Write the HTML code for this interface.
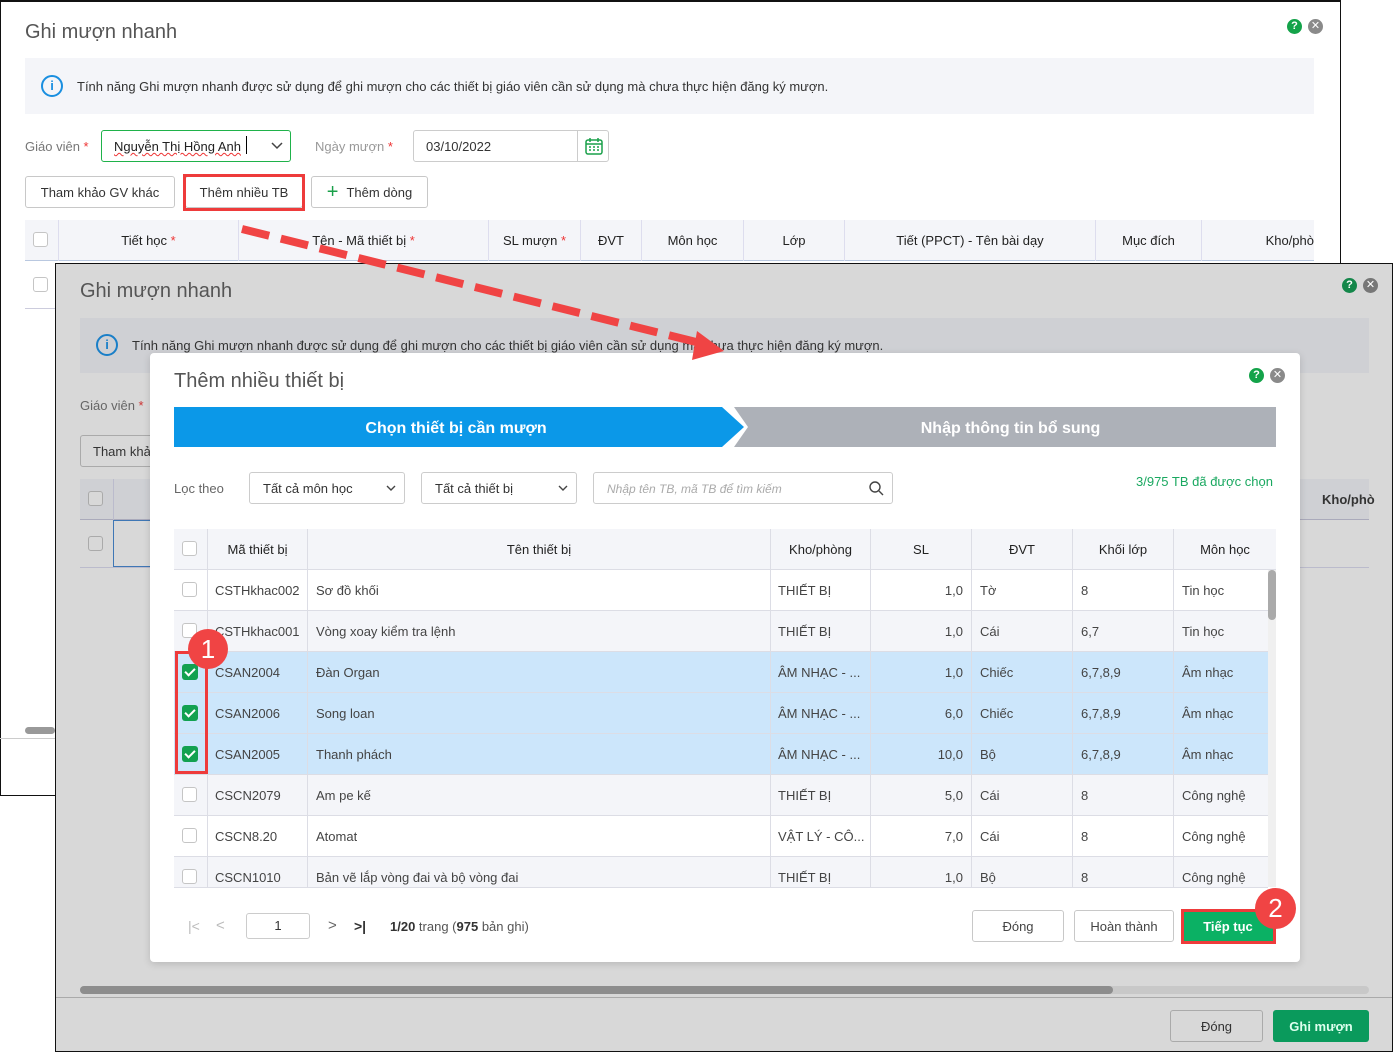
<!DOCTYPE html>
<html><head><meta charset="utf-8">
<style>
*{box-sizing:border-box;margin:0;padding:0}
body{width:1393px;height:1052px;position:relative;overflow:hidden;background:#fff;font-family:"Liberation Sans","DejaVu Sans",sans-serif;font-size:13px;color:#333}
.a{position:absolute}
.btn{position:absolute;border:1px solid #c8c8c8;border-radius:3px;background:#fff;display:flex;align-items:center;justify-content:center;font-size:13px;color:#333}
.cb{position:absolute;width:15px;height:15px;border:1px solid #c5c5c5;border-radius:3px;background:#fff}
.cbon{position:absolute;width:16px;height:16px;border-radius:3px;background:#12a150}
.cbon:after{content:"";position:absolute;left:5px;top:2px;width:4px;height:8px;border:solid #fff;border-width:0 2px 2px 0;transform:rotate(45deg)}
.th{position:absolute;display:flex;align-items:center;justify-content:center;font-size:13px;color:#222}
.row{position:absolute;left:174px;width:1094px;height:41px;border-bottom:1px solid #dcdde5}
.c{position:absolute;top:0;height:41px;line-height:41px;font-size:13px;color:#444;white-space:nowrap;overflow:hidden}
.vl{position:absolute;top:0;width:1px;height:41px;background:#dcdde5}
.ic{position:absolute;width:15px;height:15px;border-radius:50%;color:#fff;font-size:11px;font-weight:bold;text-align:center;line-height:15px}
</style></head><body>

<div class="a" style="left:0;top:0;width:1341px;height:796px;border:1px solid #111;border-top:2px solid #111;background:#fff"></div>
<div class="a" style="left:25px;top:21px;font-size:20px;color:#555">Ghi mượn nhanh</div>
<div class="ic" style="left:1287px;top:19px;background:#14a34a">?</div>
<div class="ic" style="left:1308px;top:19px;background:#8a8a8a">✕</div>
<div class="a" style="left:25px;top:58px;width:1289px;height:56px;background:#f4f5f9"></div>
<div class="a" style="left:41px;top:75px;width:22px;height:22px;border:2px solid #1a8fe0;border-radius:50%;color:#1a8fe0;text-align:center;font-size:13px;line-height:18px;font-weight:bold">i</div>
<div class="a" style="left:77px;top:79px;color:#333">Tính năng Ghi mượn nhanh được sử dụng để ghi mượn cho các thiết bị giáo viên cần sử dụng mà chưa thực hiện đăng ký mượn.</div>
<div class="a" style="left:25px;top:139px;color:#777">Giáo viên <span style="color:#e33">*</span></div>
<div class="a" style="left:101px;top:130px;width:190px;height:32px;border:1px solid #1fb24a;border-radius:3px"></div>
<div class="a" style="left:114px;top:139px;color:#222;text-decoration:underline wavy #e33;text-decoration-thickness:1px">Nguyễn Thị Hồng Anh</div>
<div class="a" style="left:246px;top:136px;width:1px;height:18px;background:#000"></div>
<svg class="a" style="left:271px;top:142px" width="12" height="8"><path d="M1 1l5 5 5-5" fill="none" stroke="#444" stroke-width="1.5"/></svg>
<div class="a" style="left:315px;top:139px;color:#999">Ngày mượn <span style="color:#e33">*</span></div>
<div class="a" style="left:413px;top:130px;width:196px;height:32px;border:1px solid #ccc;border-radius:3px"></div>
<div class="a" style="left:577px;top:131px;width:1px;height:30px;background:#ccc"></div>
<div class="a" style="left:426px;top:139px;color:#333">03/10/2022</div>
<svg class="a" style="left:584px;top:136px" width="20" height="20"><rect x="2" y="4" width="16" height="14" rx="2" fill="none" stroke="#1aa04a" stroke-width="1.5"/><path d="M2 8h16M6 2v4M14 2v4" stroke="#1aa04a" stroke-width="1.5"/><path d="M5 11h2M9 11h2M13 11h2M5 14h2M9 14h2M13 14h2" stroke="#1aa04a" stroke-width="1.5"/></svg>
<div class="btn" style="left:25px;top:176px;width:150px;height:32px">Tham khảo GV khác</div>
<div class="btn" style="left:185px;top:176px;width:118px;height:32px">Thêm nhiều TB</div>
<div class="a" style="left:183px;top:174px;width:122px;height:37px;border:3px solid #ee3b3b"></div>
<div class="btn" style="left:311px;top:176px;width:117px;height:32px"><span style="color:#1aa04a;font-size:20px;margin-right:8px;font-weight:300">+</span>Thêm dòng</div>
<div class="a" style="left:25px;top:220px;width:1289px;height:41px;background:#f4f5f9;border-bottom:1px solid #b9c8e0"></div>
<div class="cb" style="left:33px;top:232px"></div>
<div class="th" style="left:58px;top:220px;width:180px;height:41px;border-left:1px solid #dde">Tiết học&nbsp;<span style="color:#e33">*</span></div>
<div class="th" style="left:238px;top:220px;width:250px;height:41px;border-left:1px solid #dde">Tên - Mã thiết bị&nbsp;<span style="color:#e33">*</span></div>
<div class="th" style="left:488px;top:220px;width:92px;height:41px;border-left:1px solid #dde">SL mượn&nbsp;<span style="color:#e33">*</span></div>
<div class="th" style="left:580px;top:220px;width:61px;height:41px;border-left:1px solid #dde">ĐVT</div>
<div class="th" style="left:641px;top:220px;width:102px;height:41px;border-left:1px solid #dde">Môn học</div>
<div class="th" style="left:743px;top:220px;width:101px;height:41px;border-left:1px solid #dde">Lớp</div>
<div class="th" style="left:844px;top:220px;width:251px;height:41px;border-left:1px solid #dde">Tiết (PPCT) - Tên bài dạy</div>
<div class="th" style="left:1095px;top:220px;width:106px;height:41px;border-left:1px solid #dde">Mục đích</div>
<div class="th" style="left:1201px;top:220px;width:113px;height:41px;border-left:1px solid #dde;justify-content:flex-end">Kho/phò</div>
<div class="cb" style="left:33px;top:277px"></div>
<div class="a" style="left:25px;top:308px;width:30px;height:1px;background:#ccd"></div>
<div class="a" style="left:25px;top:727px;width:30px;height:7px;border-radius:4px;background:#999"></div>
<div class="a" style="left:0;top:738px;width:55px;height:1px;background:#ccc"></div>

<div class="a" style="left:55px;top:263px;width:1338px;height:789px;background:#d8d8d8;border:1px solid #111"></div>
<div class="a" style="left:80px;top:280px;font-size:20px;color:#555">Ghi mượn nhanh</div>
<div class="ic" style="left:1342px;top:278px;background:#14874a">?</div>
<div class="ic" style="left:1363px;top:278px;background:#777">✕</div>
<div class="a" style="left:80px;top:318px;width:1289px;height:55px;background:#cfd0d4"></div>
<div class="a" style="left:96px;top:334px;width:22px;height:22px;border:2px solid #1a7fc8;border-radius:50%;color:#1a7fc8;text-align:center;font-size:13px;line-height:18px;font-weight:bold">i</div>
<div class="a" style="left:132px;top:338px;color:#333">Tính năng Ghi mượn nhanh được sử dụng để ghi mượn cho các thiết bị giáo viên cần sử dụng mà chưa thực hiện đăng ký mượn.</div>
<div class="a" style="left:80px;top:398px;color:#666">Giáo viên <span style="color:#c33">*</span></div>
<div class="a" style="left:80px;top:435px;width:100px;height:32px;border:1px solid #aaa;border-radius:3px;background:#d8d8d8;padding:8px 12px;color:#333">Tham khảo</div>
<div class="a" style="left:80px;top:479px;width:1289px;height:41px;background:#cfd0d4;border-bottom:1px solid #aab"></div>
<div class="a" style="left:88px;top:491px;width:15px;height:15px;border:1px solid #aaa;border-radius:3px;background:#d8d8d8"></div>
<div class="a" style="left:113px;top:479px;width:1px;height:41px;background:#bbc"></div>
<div class="a" style="left:1322px;top:492px;font-weight:bold;color:#333">Kho/phò</div>
<div class="a" style="left:88px;top:536px;width:15px;height:15px;border:1px solid #aaa;border-radius:3px;background:#d8d8d8"></div>
<div class="a" style="left:113px;top:520px;width:40px;height:47px;border:1.5px solid #3f77b5;border-right:none"></div>
<div class="a" style="left:80px;top:567px;width:1289px;height:1px;background:#bbc"></div>
<div class="a" style="left:80px;top:986px;width:1289px;height:8px;border-radius:4px;background:#c8c8c8"></div>
<div class="a" style="left:80px;top:986px;width:1033px;height:8px;border-radius:4px;background:#8d8d8d"></div>
<div class="a" style="left:56px;top:997px;width:1336px;height:1px;background:#aaa"></div>
<div class="a" style="left:1170px;top:1010px;width:93px;height:32px;border:1px solid #aaa;border-radius:3px;display:flex;align-items:center;justify-content:center;color:#333">Đóng</div>
<div class="a" style="left:1273px;top:1010px;width:96px;height:32px;border-radius:3px;background:#0a9a5c;display:flex;align-items:center;justify-content:center;color:#dfe;font-weight:bold">Ghi mượn</div>

<div class="a" style="left:150px;top:353px;width:1150px;height:609px;background:#fff;border-radius:4px;box-shadow:0 2px 8px rgba(0,0,0,.15)"></div>
<div class="a" style="left:174px;top:370px;font-size:20px;color:#555">Thêm nhiều thiết bị</div>
<div class="ic" style="left:1249px;top:368px;background:#14a34a">?</div>
<div class="ic" style="left:1270px;top:368px;background:#8a8a8a">✕</div>
<svg class="a" style="left:174px;top:407px" width="1102" height="40">
<polygon points="560,0 1102,0 1102,40 560,40 574,20" fill="#adb1b8"/>
<polygon points="0,0 548,0 570,20 548,40 0,40" fill="#0b98e8"/>
</svg>
<div class="a" style="left:174px;top:420px;width:564px;text-align:center;color:#fff;font-size:16px;font-weight:bold">Chọn thiết bị cần mượn</div>
<div class="a" style="left:745px;top:420px;width:531px;text-align:center;color:#fff;font-size:16px;font-weight:bold">Nhập thông tin bổ sung</div>
<div class="a" style="left:174px;top:481px;color:#666">Lọc theo</div>
<div class="a" style="left:249px;top:472px;width:156px;height:32px;border:1px solid #ccc;border-radius:3px;padding:8px 13px;color:#333">Tất cả môn học</div>
<svg class="a" style="left:386px;top:485px" width="10" height="7"><path d="M1 1l4 4 4-4" fill="none" stroke="#444" stroke-width="1.4"/></svg>
<div class="a" style="left:421px;top:472px;width:156px;height:32px;border:1px solid #ccc;border-radius:3px;padding:8px 13px;color:#333">Tất cả thiết bị</div>
<svg class="a" style="left:558px;top:485px" width="10" height="7"><path d="M1 1l4 4 4-4" fill="none" stroke="#444" stroke-width="1.4"/></svg>
<div class="a" style="left:593px;top:472px;width:300px;height:32px;border:1px solid #ccc;border-radius:3px;padding:9px 13px;color:#aaa;font-style:italic;font-size:12px">Nhập tên TB, mã TB để  tìm kiếm</div>
<svg class="a" style="left:868px;top:480px" width="16" height="16"><circle cx="7" cy="7" r="5" fill="none" stroke="#444" stroke-width="1.4"/><path d="M11 11l4 4" stroke="#444" stroke-width="1.4"/></svg>
<div class="a" style="left:1136px;top:474px;color:#1aa860">3/975 TB đã được chọn</div>

<div class="a" style="left:174px;top:529px;width:1102px;height:41px;background:#f4f5f9;border-bottom:1px solid #dcdde5"></div>
<div class="cb" style="left:182px;top:541px"></div>
<div class="th" style="left:207px;top:529px;width:100px;height:41px;border-left:1px solid #dcdde5">Mã thiết bị</div>
<div class="th" style="left:307px;top:529px;width:463px;height:41px;border-left:1px solid #dcdde5">Tên thiết bị</div>
<div class="th" style="left:770px;top:529px;width:100px;height:41px;border-left:1px solid #dcdde5">Kho/phòng</div>
<div class="th" style="left:870px;top:529px;width:101px;height:41px;border-left:1px solid #dcdde5">SL</div>
<div class="th" style="left:971px;top:529px;width:101px;height:41px;border-left:1px solid #dcdde5">ĐVT</div>
<div class="th" style="left:1072px;top:529px;width:101px;height:41px;border-left:1px solid #dcdde5">Khối lớp</div>
<div class="th" style="left:1173px;top:529px;width:103px;height:41px;border-left:1px solid #dcdde5">Môn học</div>

<div class="a" style="left:174px;top:570px;width:1094px;height:317px;overflow:hidden">
<div style="position:relative;left:-174px;top:-570px">
<div class="row" style="top:570px;background:#fff"><div class="cb" style="left:8px;top:12px"></div><div class="vl" style="left:33px"></div><div class="c" style="left:41px">CSTHkhac002</div><div class="vl" style="left:133px"></div><div class="c" style="left:142px">Sơ đồ khối</div><div class="vl" style="left:596px"></div><div class="c" style="left:604px">THIẾT BỊ</div><div class="vl" style="left:696px"></div><div class="c" style="left:697px;width:92px;text-align:right">1,0</div><div class="vl" style="left:797px"></div><div class="c" style="left:806px">Tờ</div><div class="vl" style="left:898px"></div><div class="c" style="left:907px">8</div><div class="vl" style="left:999px"></div><div class="c" style="left:1008px">Tin học</div></div>
<div class="row" style="top:611px;background:#f4f5f9"><div class="cb" style="left:8px;top:12px"></div><div class="vl" style="left:33px"></div><div class="c" style="left:41px">CSTHkhac001</div><div class="vl" style="left:133px"></div><div class="c" style="left:142px">Vòng xoay kiểm tra lệnh</div><div class="vl" style="left:596px"></div><div class="c" style="left:604px">THIẾT BỊ</div><div class="vl" style="left:696px"></div><div class="c" style="left:697px;width:92px;text-align:right">1,0</div><div class="vl" style="left:797px"></div><div class="c" style="left:806px">Cái</div><div class="vl" style="left:898px"></div><div class="c" style="left:907px">6,7</div><div class="vl" style="left:999px"></div><div class="c" style="left:1008px">Tin học</div></div>
<div class="row" style="top:652px;background:#cce6fb"><div class="cbon" style="left:8px;top:12px"></div><div class="vl" style="left:33px"></div><div class="c" style="left:41px">CSAN2004</div><div class="vl" style="left:133px"></div><div class="c" style="left:142px">Đàn Organ</div><div class="vl" style="left:596px"></div><div class="c" style="left:604px">ÂM NHẠC - ...</div><div class="vl" style="left:696px"></div><div class="c" style="left:697px;width:92px;text-align:right">1,0</div><div class="vl" style="left:797px"></div><div class="c" style="left:806px">Chiếc</div><div class="vl" style="left:898px"></div><div class="c" style="left:907px">6,7,8,9</div><div class="vl" style="left:999px"></div><div class="c" style="left:1008px">Âm nhạc</div></div>
<div class="row" style="top:693px;background:#cce6fb"><div class="cbon" style="left:8px;top:12px"></div><div class="vl" style="left:33px"></div><div class="c" style="left:41px">CSAN2006</div><div class="vl" style="left:133px"></div><div class="c" style="left:142px">Song loan</div><div class="vl" style="left:596px"></div><div class="c" style="left:604px">ÂM NHẠC - ...</div><div class="vl" style="left:696px"></div><div class="c" style="left:697px;width:92px;text-align:right">6,0</div><div class="vl" style="left:797px"></div><div class="c" style="left:806px">Chiếc</div><div class="vl" style="left:898px"></div><div class="c" style="left:907px">6,7,8,9</div><div class="vl" style="left:999px"></div><div class="c" style="left:1008px">Âm nhạc</div></div>
<div class="row" style="top:734px;background:#cce6fb"><div class="cbon" style="left:8px;top:12px"></div><div class="vl" style="left:33px"></div><div class="c" style="left:41px">CSAN2005</div><div class="vl" style="left:133px"></div><div class="c" style="left:142px">Thanh phách</div><div class="vl" style="left:596px"></div><div class="c" style="left:604px">ÂM NHẠC - ...</div><div class="vl" style="left:696px"></div><div class="c" style="left:697px;width:92px;text-align:right">10,0</div><div class="vl" style="left:797px"></div><div class="c" style="left:806px">Bộ</div><div class="vl" style="left:898px"></div><div class="c" style="left:907px">6,7,8,9</div><div class="vl" style="left:999px"></div><div class="c" style="left:1008px">Âm nhạc</div></div>
<div class="row" style="top:775px;background:#f4f5f9"><div class="cb" style="left:8px;top:12px"></div><div class="vl" style="left:33px"></div><div class="c" style="left:41px">CSCN2079</div><div class="vl" style="left:133px"></div><div class="c" style="left:142px">Am pe kế</div><div class="vl" style="left:596px"></div><div class="c" style="left:604px">THIẾT BỊ</div><div class="vl" style="left:696px"></div><div class="c" style="left:697px;width:92px;text-align:right">5,0</div><div class="vl" style="left:797px"></div><div class="c" style="left:806px">Cái</div><div class="vl" style="left:898px"></div><div class="c" style="left:907px">8</div><div class="vl" style="left:999px"></div><div class="c" style="left:1008px">Công nghệ</div></div>
<div class="row" style="top:816px;background:#fff"><div class="cb" style="left:8px;top:12px"></div><div class="vl" style="left:33px"></div><div class="c" style="left:41px">CSCN8.20</div><div class="vl" style="left:133px"></div><div class="c" style="left:142px">Atomat</div><div class="vl" style="left:596px"></div><div class="c" style="left:604px">VẬT LÝ - CÔ...</div><div class="vl" style="left:696px"></div><div class="c" style="left:697px;width:92px;text-align:right">7,0</div><div class="vl" style="left:797px"></div><div class="c" style="left:806px">Cái</div><div class="vl" style="left:898px"></div><div class="c" style="left:907px">8</div><div class="vl" style="left:999px"></div><div class="c" style="left:1008px">Công nghệ</div></div>
<div class="row" style="top:857px;background:#f4f5f9"><div class="cb" style="left:8px;top:12px"></div><div class="vl" style="left:33px"></div><div class="c" style="left:41px">CSCN1010</div><div class="vl" style="left:133px"></div><div class="c" style="left:142px">Bản vẽ lắp vòng đai và bộ vòng đai</div><div class="vl" style="left:596px"></div><div class="c" style="left:604px">THIẾT BỊ</div><div class="vl" style="left:696px"></div><div class="c" style="left:697px;width:92px;text-align:right">1,0</div><div class="vl" style="left:797px"></div><div class="c" style="left:806px">Bộ</div><div class="vl" style="left:898px"></div><div class="c" style="left:907px">8</div><div class="vl" style="left:999px"></div><div class="c" style="left:1008px">Công nghệ</div></div>
</div></div>
<div class="a" style="left:174px;top:887px;width:1094px;height:1px;background:#dcdde5"></div>
<div class="a" style="left:1268px;top:570px;width:8px;height:317px;background:#f0f0f0"></div>
<div class="a" style="left:1268px;top:570px;width:8px;height:50px;border-radius:4px;background:#aaa"></div>

<div class="a" style="left:188px;top:918px;color:#bbb;font-size:14px">|&lt;</div>
<div class="a" style="left:216px;top:917px;color:#bbb;font-size:15px">&lt;</div>
<div class="a" style="left:246px;top:913px;width:64px;height:26px;border:1px solid #ccc;border-radius:3px;text-align:center;line-height:24px;color:#333">1</div>
<div class="a" style="left:328px;top:917px;color:#666;font-size:15px">&gt;</div>
<div class="a" style="left:354px;top:918px;color:#333;font-size:14px;font-weight:bold">&gt;|</div>
<div class="a" style="left:390px;top:919px;color:#555"><b style="color:#333">1/20</b> trang (<b style="color:#333">975</b> bản ghi)</div>
<div class="btn" style="left:972px;top:910px;width:92px;height:32px;color:#444">Đóng</div>
<div class="btn" style="left:1074px;top:910px;width:100px;height:32px;color:#444">Hoàn thành</div>
<div class="a" style="left:1183px;top:911px;width:90px;height:31px;background:#0bb164;color:#fff;font-weight:bold;display:flex;align-items:center;justify-content:center">Tiếp tục</div>
<div class="a" style="left:1181px;top:909px;width:95px;height:35px;border:3px solid #ee3b3b"></div>

<div class="a" style="left:175px;top:651px;width:33px;height:123px;border:3px solid #ee3b3b"></div>
<div class="a" style="left:188px;top:629px;width:40px;height:40px;border-radius:50%;background:#f04444;color:#fff;font-size:26px;text-align:center;line-height:40px">1</div>
<div class="a" style="left:1255px;top:888px;width:41px;height:41px;border-radius:50%;background:#f04444;color:#fff;font-size:26px;text-align:center;line-height:41px">2</div>
<svg class="a" style="left:0;top:0" width="1393" height="1052">
<line x1="242" y1="229" x2="700" y2="343" stroke="#f04444" stroke-width="8" stroke-dasharray="28,12"/>
<polygon points="697,331 724,351 692,360" fill="#f04444"/>
</svg>
</body></html>
